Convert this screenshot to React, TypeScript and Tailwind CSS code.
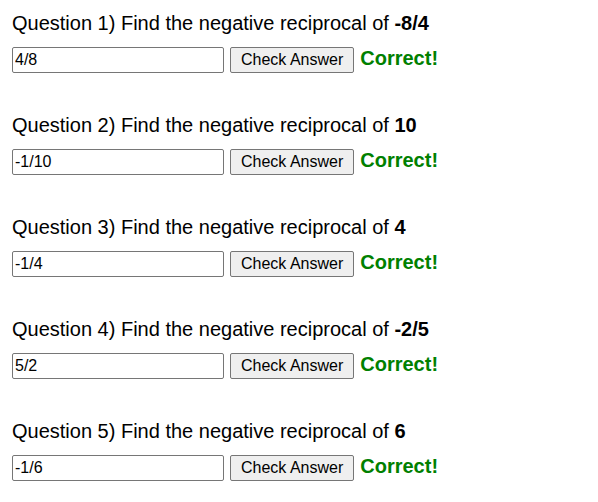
import { useState } from 'react';

// Negative reciprocal quiz: five questions, each with an answer box
const questions = [
  { id: 1, value: '-8/4', answer: '4/8' },
  { id: 2, value: '10', answer: '-1/10' },
  { id: 3, value: '4', answer: '-1/4' },
  { id: 4, value: '-2/5', answer: '5/2' },
  { id: 5, value: '6', answer: '-1/6' },
];

function QuestionRow({ id, value, answer }: { id: number; value: string; answer: string }) {
  const [text, setText] = useState(answer);
  const [checked, setChecked] = useState(true);

  return (
    <div className="flex flex-col">
      <div className="text-[20px] leading-[23px] text-black">
        Question {id}) Find the negative reciprocal of <b>{value}</b>
      </div>
      <div className="mt-[12px] flex h-[26px] items-baseline gap-[6px]">
        <input
          type="text"
          value={text}
          onChange={(e) => {
            setText(e.target.value);
            setChecked(false);
          }}
          className="h-[26px] w-[212px] rounded-[2px] border border-[#767676] bg-white px-[2px] text-[16px] text-black outline-none"
        />
        <button
          onClick={() => setChecked(true)}
          className="h-[26px] rounded-[2px] border border-[#767676] bg-[#efefef] px-[10px] text-[16px] leading-[18px] text-black"
        >
          Check Answer
        </button>
        {checked && (
          <span className="text-[20px] font-bold leading-[23px] text-[#008000]">Correct!</span>
        )}
      </div>
    </div>
  );
}

export default function App() {
  return (
    <div className="flex min-h-screen flex-col gap-[41px] bg-white pl-[12px] pt-[12px] font-['Liberation_Sans',Arial,sans-serif]">
      {questions.map((q) => (
        <QuestionRow key={q.id} {...q} />
      ))}
    </div>
  );
}
